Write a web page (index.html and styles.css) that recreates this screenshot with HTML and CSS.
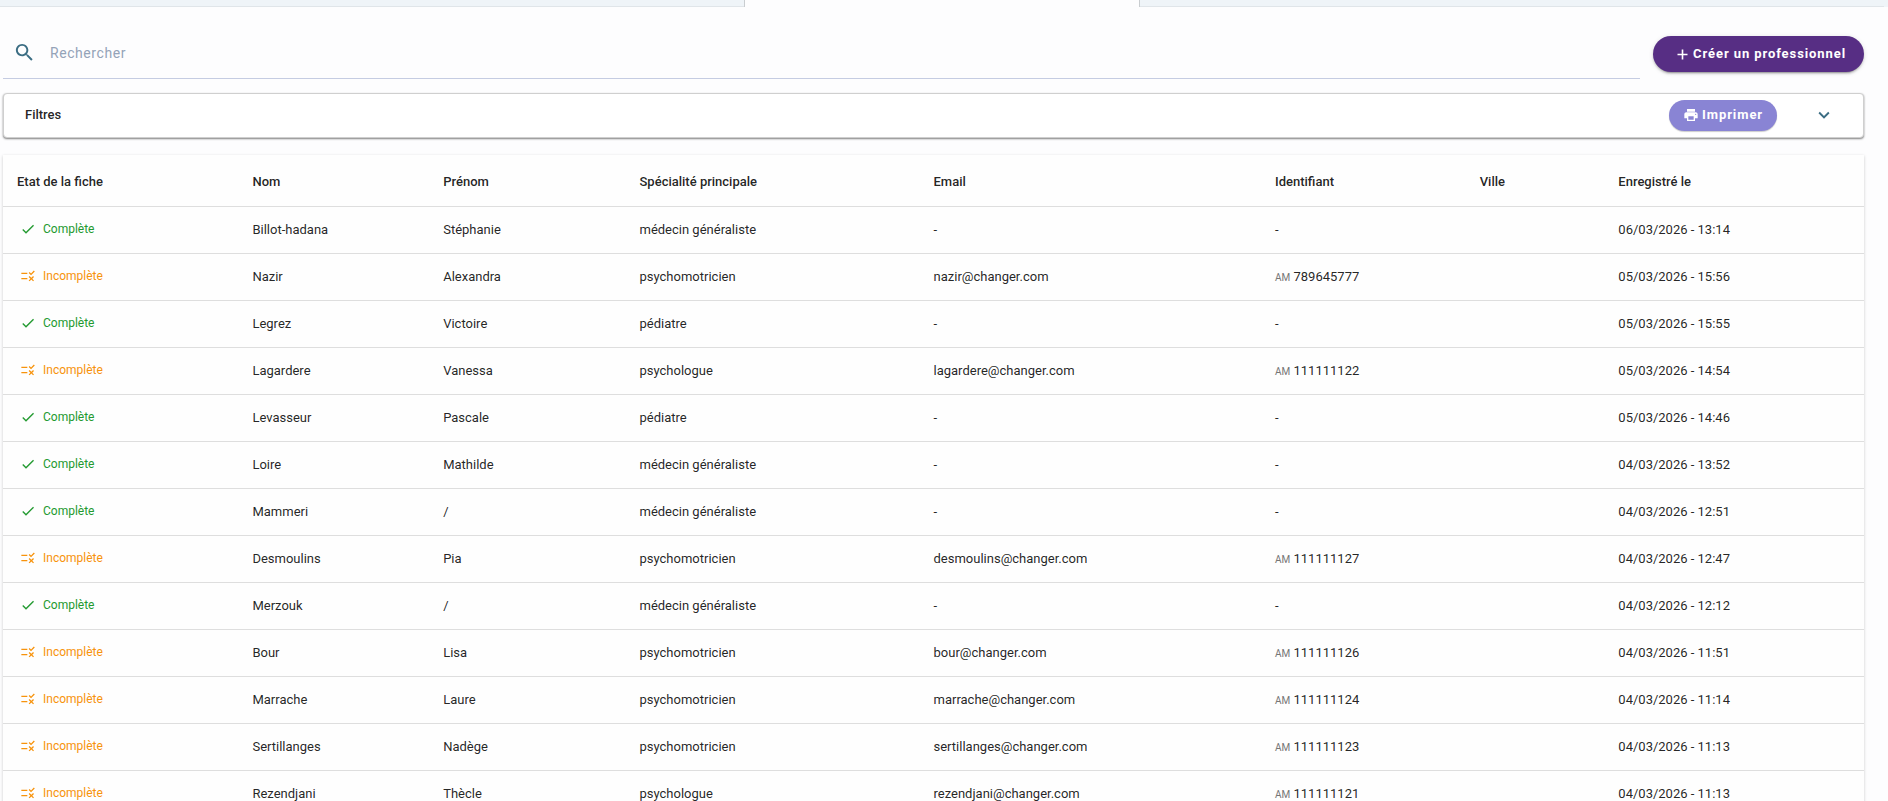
FILE: index.html
```
<!DOCTYPE html>
<html lang="fr">

<head>
    <meta charset="UTF-8">
    <meta name="viewport" content="width=device-width, initial-scale=1.0">
    <title>Professionnels</title>
    <link rel="stylesheet" href="styles.css">
</head>

<body>
    <svg class="sprite" aria-hidden="true">
        <symbol id="check" viewBox="0 0 24 24">
            <path d="M9 16.17L4.83 12l-1.42 1.41L9 19 21 7l-1.41-1.41z" />
        </symbol>
        <symbol id="rule" viewBox="0 0 24 24">
            <path d="M16.54 11L13 7.46l1.41-1.41 2.12 2.12 4.24-4.24 1.41 1.41L16.54 11zM11 7H2v2h9V7zm10 6.41L19.59 12 17 14.59 14.41 12 13 13.41 15.59 16 13 18.59 14.41 20 17 17.41 19.59 20 21 18.59 18.41 16 21 13.41zM11 15H2v2h9v-2z" />
        </symbol>
    </svg>

    <div class="tabs">
        <div class="tab"></div>
        <div class="tab active"></div>
        <div class="tab"></div>
    </div>

    <main class="content">
        <div class="toolbar">
            <label class="search">
                <svg class="search-icon" viewBox="0 0 24 24" role="img" aria-label="Rechercher">
                    <path d="M15.5 14h-.79l-.28-.27C15.41 12.59 16 11.11 16 9.5 16 5.91 13.09 3 9.5 3S3 5.91 3 9.5 5.91 16 9.5 16c1.61 0 3.09-.59 4.23-1.57l.27.28v.79l5 4.99L20.49 19l-4.99-5zm-6 0C7.01 14 5 11.99 5 9.5S7.01 5 9.5 5 14 7.01 14 9.5 11.99 14 9.5 14z" />
                </svg>
                <input type="text" placeholder="Rechercher">
            </label>
            <button class="btn create">
                <svg viewBox="0 0 24 24" aria-hidden="true"><path d="M20 13.300h-6.700V20h-2.600v-6.700H4v-2.600h6.700V4h2.600v6.700H20z" /></svg>
                Créer un professionnel
            </button>
        </div>

        <div class="filters">
            <span class="filters-title">Filtres</span>
            <button class="btn print">
                <svg viewBox="0 0 24 24" aria-hidden="true"><path d="M19 8H5c-1.660 0-3 1.340-3 3v6h4v4h12v-4h4v-6c0-1.660-1.340-3-3-3zm-3 11H8v-5h8v5zm3-7c-.55 0-1-.45-1-1s.45-1 1-1 1 .45 1 1-.45 1-1 1zm-1-9H6v4h12V3z" /></svg>
                Imprimer
            </button>
            <button class="toggle" aria-label="Afficher les filtres">
                <svg viewBox="0 0 24 24" aria-hidden="true"><path d="M7.410 8.590L12 13.170l4.590-4.580L18 10l-6 6-6-6z" /></svg>
            </button>
        </div>

        <table class="list">
            <thead>
                <tr>
                    <th class="col-etat">Etat de la fiche</th>
                    <th class="col-nom">Nom</th>
                    <th class="col-prenom">Prénom</th>
                    <th class="col-specialite">Spécialité principale</th>
                    <th class="col-email">Email</th>
                    <th class="col-identifiant">Identifiant</th>
                    <th class="col-ville">Ville</th>
                    <th>Enregistré le</th>
                </tr>
            </thead>
            <tbody id="rows"></tbody>
        </table>
    </main>

    <script src="script.js"></script>
</body>

</html>
```
FILE: styles.css
```
* {
    box-sizing: border-box;
}

body {
    margin: 0;
    height: 100vh;
    overflow: hidden;
    background-color: #fdfdfe;
    color: rgba(0, 0, 0, 0.87);
    font-family: Roboto, "Liberation Sans", sans-serif;
    font-size: 13px;
}

svg {
    fill: currentColor;
    flex: none;
}

.sprite {
    display: none;
}

.tabs {
    display: flex;
    height: 7px;
    padding-right: 4px;
    background-color: #eff4f8;
}

.tab {
    flex: 1 1 0;
    border-bottom: 1px solid #e0e5e9;
}

.tab.active {
    flex: 0 0 21%;
    background-color: #fdfdfe;
    border: 1px solid #c9cdd0;
    border-width: 0 1px;
}

.content {
    padding: 20px 24px 0 3px;
}

.toolbar {
    display: flex;
    gap: 13px;
}

.search {
    flex: 1;
    display: flex;
    align-items: center;
    gap: 14px;
    height: 52px;
    padding-left: 10px;
    border-bottom: 1px solid #c5cce2;
}

.search-icon {
    width: 23px;
    height: 23px;
    color: #3b6d83;
}

.search input {
    flex: 1;
    border: 0;
    padding: 0;
    outline: none;
    background: none;
    color: inherit;
    font: 14px/20px Roboto, "Liberation Sans", sans-serif;
    letter-spacing: 0.04em;
}

.search input::placeholder {
    color: #94a3b8;
}

.btn {
    display: flex;
    align-items: center;
    border: 0;
    border-radius: 18px;
    color: #fff;
    font: 700 13px/20px Roboto, "Liberation Sans", sans-serif;
    letter-spacing: 0.07em;
    white-space: nowrap;
    cursor: pointer;
}

.create {
    height: 36px;
    margin-top: 9px;
    padding: 0 18px 0 22px;
    gap: 3px;
    background-color: #572e84;
    box-shadow: 0 3px 1px -2px rgba(0, 0, 0, 0.2), 0 2px 2px rgba(0, 0, 0, 0.14), 0 1px 5px rgba(0, 0, 0, 0.12);
}

.create svg {
    width: 15px;
    height: 15px;
}

.filters {
    display: flex;
    align-items: center;
    height: 45px;
    margin-top: 14px;
    padding: 0 28px 0 21px;
    border: 1px solid #cfcfcf;
    border-radius: 4px;
    background-color: #fff;
    box-shadow: 0 1px 2px rgba(0, 0, 0, 0.5);
}

.filters-title {
    flex: 1;
    padding-bottom: 2px;
    font-weight: 500;
}

.print {
    height: 31px;
    padding: 0 14px 2px;
    gap: 3px;
    background-color: #8984d4;
    box-shadow: 0 1px 1px rgba(0, 0, 0, 0.2);
}

.print svg {
    width: 16px;
    height: 16px;
}

.toggle {
    display: flex;
    margin-left: 36px;
    border: 0;
    padding: 0 0 2px;
    background: none;
    color: #3b6d83;
    cursor: pointer;
}

.toggle svg {
    width: 22px;
    height: 22px;
}

.list {
    width: 100%;
    margin-top: 17px;
    border-collapse: separate;
    border-spacing: 0;
    table-layout: fixed;
    background-color: #fefefe;
    box-shadow: 0 1px 3px rgba(0, 0, 0, 0.2);
}

.list th,
.list td {
    height: 47px;
    padding: 0 14px 2px;
    border-bottom: 1px solid #dedede;
    text-align: left;
    white-space: nowrap;
}

.list th {
    height: 52px;
    padding: 2px 14px 0;
    font-weight: 500;
}

.col-etat { width: 12.65%; }
.col-nom { width: 10.25%; }
.col-prenom { width: 10.55%; }
.col-specialite { width: 15.8%; }
.col-email { width: 18.35%; }
.col-identifiant { width: 11%; }
.col-ville { width: 7.45%; }

.etat {
    display: flex;
    align-items: center;
    gap: 7px;
    padding-left: 3px;
    font-size: 12px;
}

.etat svg {
    width: 16px;
    height: 16px;
}

.complete {
    color: #239a30;
}

.incomplete {
    color: #f7930c;
}

.type {
    color: #757575;
    font-size: 10px;
}
```
FILE: script.js
```
const professionnels = [
    ["Billot-hadana", "Stéphanie", "médecin généraliste", "", "", "06/03/2026 - 13:14"],
    ["Nazir", "Alexandra", "psychomotricien", "nazir@changer.com", "789645777", "05/03/2026 - 15:56"],
    ["Legrez", "Victoire", "pédiatre", "", "", "05/03/2026 - 15:55"],
    ["Lagardere", "Vanessa", "psychologue", "lagardere@changer.com", "111111122", "05/03/2026 - 14:54"],
    ["Levasseur", "Pascale", "pédiatre", "", "", "05/03/2026 - 14:46"],
    ["Loire", "Mathilde", "médecin généraliste", "", "", "04/03/2026 - 13:52"],
    ["Mammeri", "/", "médecin généraliste", "", "", "04/03/2026 - 12:51"],
    ["Desmoulins", "Pia", "psychomotricien", "desmoulins@changer.com", "111111127", "04/03/2026 - 12:47"],
    ["Merzouk", "/", "médecin généraliste", "", "", "04/03/2026 - 12:12"],
    ["Bour", "Lisa", "psychomotricien", "bour@changer.com", "111111126", "04/03/2026 - 11:51"],
    ["Marrache", "Laure", "psychomotricien", "marrache@changer.com", "111111124", "04/03/2026 - 11:14"],
    ["Sertillanges", "Nadège", "psychomotricien", "sertillanges@changer.com", "111111123", "04/03/2026 - 11:13"],
    ["Rezendjani", "Thècle", "psychologue", "rezendjani@changer.com", "111111121", "04/03/2026 - 11:13"]
]

// a record with an AM identifier is still incomplete
function etat(identifiant) {
    if (identifiant) {
        return '<div class="etat incomplete"><svg aria-hidden="true"><use href="#rule"/></svg>Incomplète</div>'
    }
    return '<div class="etat complete"><svg aria-hidden="true"><use href="#check"/></svg>Complète</div>'
}

const rows = document.getElementById("rows")
professionnels.forEach(([nom, prenom, specialite, email, identifiant, date]) => {
    const tr = document.createElement("tr")
    tr.innerHTML = `
        <td>${etat(identifiant)}</td>
        <td>${nom}</td>
        <td>${prenom}</td>
        <td>${specialite}</td>
        <td>${email || "-"}</td>
        <td>${identifiant ? `<span class="type">AM</span> ${identifiant}` : "-"}</td>
        <td></td>
        <td>${date}</td>`
    rows.appendChild(tr)
})
```
